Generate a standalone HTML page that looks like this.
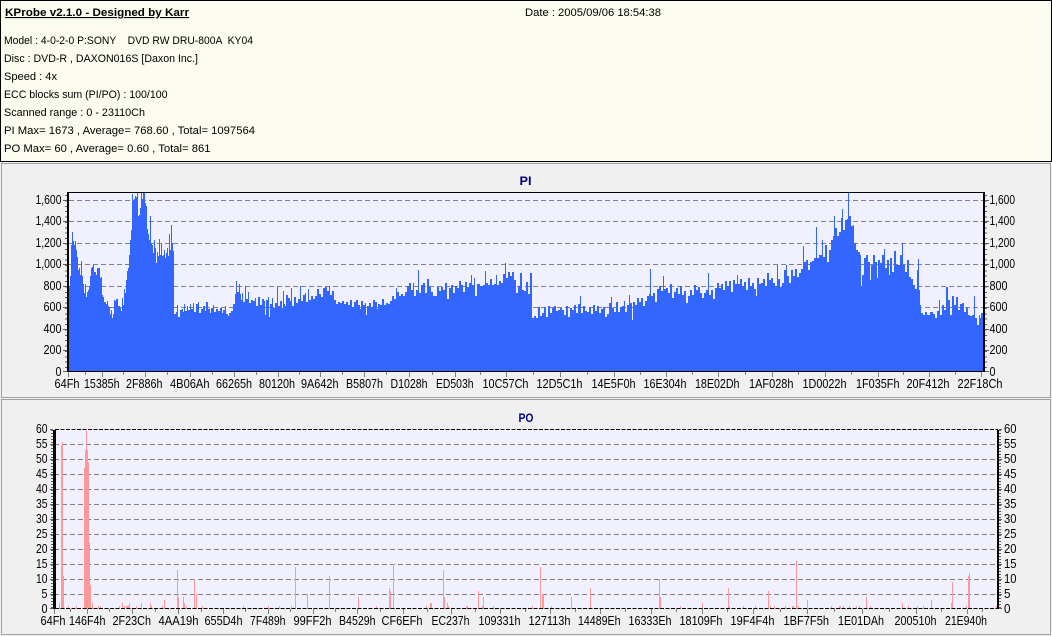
<!DOCTYPE html>
<html><head><meta charset="utf-8"><style>
html,body{margin:0;padding:0;background:#f0f0f0;width:1052px;height:636px;overflow:hidden}
svg{display:block}
text{font-family:"Liberation Sans",sans-serif;fill:#000;white-space:pre}
.h text{font-size:11px}
.a text{font-size:13px}
.c{shape-rendering:crispEdges}
</style></head><body>
<svg width="1052" height="636" viewBox="0 0 1052 636" xmlns="http://www.w3.org/2000/svg">
<rect width="1052" height="636" fill="#f0f0f0"/>
<g class="c">
<rect x="0.5" y="0.5" width="1051" height="161" fill="#fbfbef" stroke="#000"/>
<rect x="0" y="161" width="1052" height="1" fill="#000"/>
<rect x="1.5" y="163.5" width="1049" height="234" fill="#f0f0f0" stroke="#a0a0a0"/>
<rect x="1.5" y="399.5" width="1049" height="235" fill="#f0f0f0" stroke="#a0a0a0"/>
<rect x="68" y="192" width="916" height="180" fill="#f0f0ff"/>
<rect x="53" y="430" width="945" height="179" fill="#f0f0ff"/>
<path stroke="#808080" stroke-dasharray="5 3" fill="none" d="M69 200.5H984M69 221.5H984M69 243.5H984M69 264.5H984M69 286.5H984M69 307.5H984M69 329.5H984M69 350.5H984"/>
<path stroke="#808080" stroke-dasharray="5 3" fill="none" d="M54 444.5H998M54 459.5H998M54 474.5H998M54 489.5H998M54 504.5H998M54 519.5H998M54 534.5H998M54 549.5H998M54 564.5H998M54 579.5H998M54 594.5H998"/>
<path fill="#3366ff" d="M68 372V286H70V276H71V245H72V232H73V241H74V245H75V241H76V250H77V257H78V270H79V268H80V275H81V261H82V276H83V284H84V293H85V284H86V297H87V292H88V290H89V287H90V276H91V268H92V267H93V265H94V272H96V275H97V268H99V268H100V278H101V277H102V295H103V297H104V302H106V304H107V301H108V306H109V307H110V314H111V310H112V318H113V314H114V300H115V301H116V299H118V306H120V308H121V311H122V298H123V305H124V289H125V293H126V280H127V271H128V268H129V255H130V240H131V230H132V194H133V201H134V199H135V196H136V197H137V193H138V216H139V215H140V208H141V193H142V199H143V192H145V203H146V206H147V229H148V234H149V240H150V216H151V243H152V245H153V253H154V240H155V248H156V263H157V252H158V256H159V239H160V255H161V244H162V256H163V255H164V250H165V258H166V253H167V248H168V256H169V234H170V250H171V225H172V243H173V251H174V314H176V312H177V305H178V317H180V310H182V309H183V312H184V304H185V311H187V306H188V310H190V304H191V309H193V303H194V312H196V304H198V302H199V313H201V309H203V306H205V311H206V302H208V309H210V313H211V308H213V305H214V312H216V309H218V311H220V308H222V313H223V310H225V306H226V314H228V316H229V313H231V311H233V304H235V294H236V281H237V292H239V284H240V294H241V300H242V293H243V302H245V286H246V299H248V292H249V303H251V300H253V301H255V298H256V306H258V297H260V305H262V299H264V301H265V315H266V300H268V297H269V317H270V304H272V298H273V308H275V303H277V287H278V306H280V301H282V308H283V291H284V304H285V306H286V295H288V298H290V301H291V288H292V306H294V297H296V303H298V299H300V286H301V301H303V295H305V293H306V302H308V289H309V300H311V296H313V299H315V296H317V289H319V294H321V297H323V288H325V287H327V291H329V286H330V295H332V291H334V300H336V304H338V302H340V303H342V301H344V304H346V302H348V305H350V300H352V307H354V302H356V300H358V305H360V309H361V301H363V305H365V303H366V315H367V306H369V303H371V307H373V300H375V302H377V309H378V304H380V305H382V299H384V305H386V303H388V304H390V301H392V296H394V299H396V288H397V292H399V296H401V294H403V296H405V292H407V286H409V283H411V290H413V283H414V296H416V290H418V270H419V293H421V285H423V283H425V293H427V279H429V287H431V292H433V296H435V296H437V287H439V291H441V287H443V290H445V283H447V299H449V288H451V285H453V293H455V286H457V288H459V281H461V285H463V292H465V282H467V287H469V283H471V275H472V285H474V278H475V296H477V284H480V286H483V285H485V271H486V283H488V285H490V279H492V285H494V284H496V275H497V285H499V281H501V283H503V274H505V263H506V278H508V272H510V276H512V272H514V280H516V293H518V286H520V273H522V290H524V291H526V282H528V294H530V273H532V318H534V316H536V318H538V307H540V316H542V313H544V307H546V317H548V306H550V313H552V308H554V306H556V311H558V310H560V308H562V310H564V315H566V306H568V317H570V308H572V310H574V305H576V313H578V304H580V296H581V313H583V306H585V311H587V312H589V307H591V314H593V305H595V311H597V306H599V313H601V309H603V307H605V317H607V314H609V303H611V297H612V308H614V312H616V302H618V312H620V307H622V306H624V301H625V312H627V305H629V295H630V303H632V320H633V302H635V305H637V298H639V302H641V298H643V306H645V301H647V296H649V294H650V269H651V296H653V293H655V302H657V289H659V286H661V291H663V276H664V289H666V288H668V293H670V284H672V298H674V292H676V288H678V294H680V286H682V295H684V291H686V303H688V296H690V290H692V295H694V285H696V290H698V287H700V293H702V298H704V293H706V290H708V273H709V295H711V290H713V299H715V288H717V283H719V288H721V284H723V290H725V281H727V286H729V281H731V292H733V280H735V284H737V275H738V284H740V279H742V286H744V282H746V290H748V278H750V286H752V283H754V289H756V296H757V278H759V284H761V283H763V279H765V286H767V273H769V280H771V278H773V283H775V286H777V265H778V279H780V287H782V283H784V270H786V265H787V276H789V283H791V270H793V276H795V269H797V277H799V273H801V269H803V246H804V262H806V260H808V270H810V262H812V261H814V258H816V227H817V258H819V255H821V255H822V240H823V257H825V245H827V262H829V250H831V240H833V236H834V216H835V228H837V236H839V232H841V218H842V209H843V230H845V220H847V219H848V192H849V216H851V226H853V225H854V243H856V250H858V252H860V255H861V286H862V275H864V258H866V255H868V262H870V280H871V265H873V255H875V262H877V278H878V260H880V263H882V255H884V249H885V268H887V260H889V275H890V258H892V272H894V251H896V265H898V265H900V255H902V243H903V265H905V272H907V260H909V277H911V279H913V285H915V289H917V270H918V259H919V290H920V305H921V313H923V315H925V312H927V315H930V312H933V314H935V318H937V311H939V300H940V315H942V305H944V310H946V287H948V300H950V315H952V296H954V305H956V297H958V310H960V304H962V303H964V312H966V308H968V315H970V316H972V315H974V296H975V318H977V325H979V315H980V318H981V313H983V301H984V372Z"/>
<path stroke="#ff9999" fill="none" stroke-width="1" d="M59.5 609V603M61.5 609V445M62.5 609V442M63.5 609V576M68.5 609V606M76.5 609V606M84.5 609V468M85.5 609V450M86.5 609V430M87.5 609V450M88.5 609V462M89.5 609V543M90.5 609V585M92.5 609V603M98.5 609V606M100.5 609V606M119.5 609V606M122.5 609V603M124.5 609V606M126.5 609V606M127.5 609V606M128.5 609V606M129.5 609V603M136.5 609V606M141.5 609V603M150.5 609V603M151.5 609V606M162.5 609V606M164.5 609V600M177.5 609V570M178.5 609V597M183.5 609V597M184.5 609V603M186.5 609V606M194.5 609V579M196.5 609V594M202.5 609V606M243.5 609V606M268.5 609V606M279.5 609V606M291.5 609V606M295.5 609V567M307.5 609V594M329.5 609V576M358.5 609V597M376.5 609V606M389.5 609V588M390.5 609V591M393.5 609V564M426.5 609V606M430.5 609V603M431.5 609V603M443.5 609V570M444.5 609V597M447.5 609V603M448.5 609V606M466.5 609V606M467.5 609V606M478.5 609V591M482.5 609V606M483.5 609V597M493.5 609V606M532.5 609V606M540.5 609V567M542.5 609V594M543.5 609V594M551.5 609V606M571.5 609V597M590.5 609V588M659.5 609V579M660.5 609V597M680.5 609V606M702.5 609V603M728.5 609V588M729.5 609V606M743.5 609V606M755.5 609V606M768.5 609V591M770.5 609V606M774.5 609V606M785.5 609V606M792.5 609V606M793.5 609V606M796.5 609V561M798.5 609V606M807.5 609V600M831.5 609V606M839.5 609V606M840.5 609V606M843.5 609V606M849.5 609V606M856.5 609V606M859.5 609V606M866.5 609V597M870.5 609V606M902.5 609V603M908.5 609V606M917.5 609V606M923.5 609V606M931.5 609V600M951.5 609V603M952.5 609V582M966.5 609V606M968.5 609V576M969.5 609V573M996.5 609V606"/>
<path stroke="#000" fill="none" d="M68 192.5H984M68 371.5H985"/>
<rect x="67" y="192" width="2" height="180" fill="#000"/>
<rect x="983" y="192" width="2" height="180" fill="#000"/>
<path stroke="#606060" fill="none" d="M63 200.5H67M63 221.5H67M63 243.5H67M63 264.5H67M63 286.5H67M63 307.5H67M63 329.5H67M63 350.5H67M63 371.5H67M985 200.5H989M985 221.5H989M985 243.5H989M985 264.5H989M985 286.5H989M985 307.5H989M985 329.5H989M985 350.5H989M985 371.5H989"/>
<path stroke="#606060" stroke-width="2" stroke-dasharray="1 4.375" fill="none" d="M66 195V372M986 195V372"/>
<path stroke="#808080" fill="none" d="M68.5 372V377M102.5 372V377M145.5 372V377M190.5 372V377M234.5 372V377M278.5 372V377M320.5 372V377M364.5 372V377M409.5 372V377M455.5 372V377M506.5 372V377M560.5 372V377M614.5 372V377M666.5 372V377M718.5 372V377M772.5 372V377M825.5 372V377M878.5 372V377M929.5 372V377M981.5 372V377M85.5 372V375M123.5 372V375M167.5 372V375M212.5 372V375M256.5 372V375M299.5 372V375M342.5 372V375M386.5 372V375M432.5 372V375M480.5 372V375M533.5 372V375M587.5 372V375M640.5 372V375M692.5 372V375M745.5 372V375M798.5 372V375M851.5 372V375M903.5 372V375M955.5 372V375"/>
<path stroke="#000" stroke-dasharray="4 1.5" fill="none" d="M55 429.5H998M55 608.5H998"/>
<rect x="53" y="430" width="3" height="179" fill="#000"/>
<rect x="997" y="430" width="2" height="179" fill="#000"/>
<path stroke="#606060" fill="none" d="M50 429.5H53M50 444.5H53M50 459.5H53M50 474.5H53M50 489.5H53M50 504.5H53M50 519.5H53M50 534.5H53M50 549.5H53M50 564.5H53M50 579.5H53M50 594.5H53M50 608.5H53M999 429.5H1002M999 444.5H1002M999 459.5H1002M999 474.5H1002M999 489.5H1002M999 504.5H1002M999 519.5H1002M999 534.5H1002M999 549.5H1002M999 564.5H1002M999 579.5H1002M999 594.5H1002M999 608.5H1002"/>
<path stroke="#606060" stroke-dasharray="1 2" stroke-width="2" fill="none" d="M52 430V609M1000 430V609"/>
<path stroke="#808080" fill="none" d="M54.5 609V614M87.5 609V614M132.5 609V614M178.5 609V614M223.5 609V614M268.5 609V614M313.5 609V614M357.5 609V614M403.5 609V614M451.5 609V614M500.5 609V614M550.5 609V614M600.5 609V614M651.5 609V614M702.5 609V614M753.5 609V614M807.5 609V614M862.5 609V614M916.5 609V614M967.5 609V614M70.5 609V612M109.5 609V612M155.5 609V612M201.5 609V612M245.5 609V612M290.5 609V612M335.5 609V612M380.5 609V612M427.5 609V612M475.5 609V612M525.5 609V612M575.5 609V612M625.5 609V612M676.5 609V612M727.5 609V612M780.5 609V612M834.5 609V612M889.5 609V612M941.5 609V612M982.5 609V612"/>
</g>
<g class="h">
<text x="5" y="16" font-weight="bold" text-decoration="underline" textLength="184" lengthAdjust="spacingAndGlyphs">KProbe v2.1.0 - Designed by Karr</text>
<text x="525" y="16" textLength="136" lengthAdjust="spacingAndGlyphs">Date : 2005/09/06 18:54:38</text>
<text x="4" y="44" textLength="249" lengthAdjust="spacingAndGlyphs">Model : 4-0-2-0 P:SONY    DVD RW DRU-800A  KY04</text>
<text x="4" y="62" textLength="194" lengthAdjust="spacingAndGlyphs">Disc : DVD-R , DAXON016S [Daxon Inc.]</text>
<text x="4" y="80" textLength="53" lengthAdjust="spacingAndGlyphs">Speed : 4x</text>
<text x="4" y="98" textLength="163.5" lengthAdjust="spacingAndGlyphs">ECC blocks sum (PI/PO) : 100/100</text>
<text x="4" y="116" textLength="141" lengthAdjust="spacingAndGlyphs">Scanned range : 0 - 23110Ch</text>
<text x="4" y="134" textLength="251" lengthAdjust="spacingAndGlyphs">PI Max= 1673 , Average= 768.60 , Total= 1097564</text>
<text x="4" y="152" textLength="206.5" lengthAdjust="spacingAndGlyphs">PO Max= 60 , Average= 0.60 , Total= 861</text>
<text x="519.5" y="185" font-weight="bold" style="fill:#000080;font-size:12px" textLength="12" lengthAdjust="spacingAndGlyphs">PI</text>
<text x="518.5" y="422" font-weight="bold" style="fill:#000080;font-size:12px" textLength="15" lengthAdjust="spacingAndGlyphs">PO</text>
</g>
<g class="a">
<text x="35.5" y="204" textLength="26" lengthAdjust="spacingAndGlyphs">1,600</text>
<text x="35.5" y="225" textLength="26" lengthAdjust="spacingAndGlyphs">1,400</text>
<text x="35.5" y="247" textLength="26" lengthAdjust="spacingAndGlyphs">1,200</text>
<text x="35.5" y="268" textLength="26" lengthAdjust="spacingAndGlyphs">1,000</text>
<text x="43.5" y="290" textLength="18" lengthAdjust="spacingAndGlyphs">800</text>
<text x="43.5" y="311" textLength="18" lengthAdjust="spacingAndGlyphs">600</text>
<text x="43.5" y="333" textLength="18" lengthAdjust="spacingAndGlyphs">400</text>
<text x="43.5" y="354" textLength="18" lengthAdjust="spacingAndGlyphs">200</text>
<text x="55.5" y="376" textLength="6" lengthAdjust="spacingAndGlyphs">0</text>
<text x="989.5" y="204" textLength="25.5" lengthAdjust="spacingAndGlyphs">1,600</text>
<text x="989.5" y="225" textLength="25.5" lengthAdjust="spacingAndGlyphs">1,400</text>
<text x="989.5" y="247" textLength="25.5" lengthAdjust="spacingAndGlyphs">1,200</text>
<text x="989.5" y="268" textLength="25.5" lengthAdjust="spacingAndGlyphs">1,000</text>
<text x="989.5" y="290" textLength="18" lengthAdjust="spacingAndGlyphs">800</text>
<text x="989.5" y="311" textLength="18" lengthAdjust="spacingAndGlyphs">600</text>
<text x="989.5" y="333" textLength="18" lengthAdjust="spacingAndGlyphs">400</text>
<text x="989.5" y="354" textLength="18" lengthAdjust="spacingAndGlyphs">200</text>
<text x="989.5" y="376" textLength="6" lengthAdjust="spacingAndGlyphs">0</text>
<text x="54.5" y="388" textLength="25" lengthAdjust="spacingAndGlyphs">64Fh</text>
<text x="84" y="388" textLength="35.5" lengthAdjust="spacingAndGlyphs">15385h</text>
<text x="126" y="388" textLength="36.5" lengthAdjust="spacingAndGlyphs">2F886h</text>
<text x="170" y="388" textLength="39.5" lengthAdjust="spacingAndGlyphs">4B06Ah</text>
<text x="216" y="388" textLength="36" lengthAdjust="spacingAndGlyphs">66265h</text>
<text x="259" y="388" textLength="36" lengthAdjust="spacingAndGlyphs">80120h</text>
<text x="301" y="388" textLength="37.5" lengthAdjust="spacingAndGlyphs">9A642h</text>
<text x="346" y="388" textLength="37" lengthAdjust="spacingAndGlyphs">B5807h</text>
<text x="390.5" y="388" textLength="37" lengthAdjust="spacingAndGlyphs">D1028h</text>
<text x="436" y="388" textLength="37.5" lengthAdjust="spacingAndGlyphs">ED503h</text>
<text x="482.5" y="388" textLength="46" lengthAdjust="spacingAndGlyphs">10C57Ch</text>
<text x="536.5" y="388" textLength="46" lengthAdjust="spacingAndGlyphs">12D5C1h</text>
<text x="591.5" y="388" textLength="44" lengthAdjust="spacingAndGlyphs">14E5F0h</text>
<text x="643.5" y="388" textLength="43" lengthAdjust="spacingAndGlyphs">16E304h</text>
<text x="695" y="388" textLength="44.5" lengthAdjust="spacingAndGlyphs">18E02Dh</text>
<text x="749" y="388" textLength="44.5" lengthAdjust="spacingAndGlyphs">1AF028h</text>
<text x="802.5" y="388" textLength="44" lengthAdjust="spacingAndGlyphs">1D0022h</text>
<text x="856" y="388" textLength="43.5" lengthAdjust="spacingAndGlyphs">1F035Fh</text>
<text x="906.5" y="388" textLength="43" lengthAdjust="spacingAndGlyphs">20F412h</text>
<text x="957.5" y="388" textLength="45" lengthAdjust="spacingAndGlyphs">22F18Ch</text>
<text x="36" y="433" textLength="11.5" lengthAdjust="spacingAndGlyphs">60</text>
<text x="36" y="448" textLength="11.5" lengthAdjust="spacingAndGlyphs">55</text>
<text x="36" y="463" textLength="11.5" lengthAdjust="spacingAndGlyphs">50</text>
<text x="36" y="478" textLength="11.5" lengthAdjust="spacingAndGlyphs">45</text>
<text x="36" y="493" textLength="11.5" lengthAdjust="spacingAndGlyphs">40</text>
<text x="36" y="508" textLength="11.5" lengthAdjust="spacingAndGlyphs">35</text>
<text x="36" y="523" textLength="11.5" lengthAdjust="spacingAndGlyphs">30</text>
<text x="36" y="538" textLength="11.5" lengthAdjust="spacingAndGlyphs">25</text>
<text x="36" y="553" textLength="11.5" lengthAdjust="spacingAndGlyphs">20</text>
<text x="36" y="568" textLength="11.5" lengthAdjust="spacingAndGlyphs">15</text>
<text x="36" y="583" textLength="11.5" lengthAdjust="spacingAndGlyphs">10</text>
<text x="41.5" y="598" textLength="6" lengthAdjust="spacingAndGlyphs">5</text>
<text x="41.5" y="613" textLength="6" lengthAdjust="spacingAndGlyphs">0</text>
<text x="1004" y="433" textLength="12.5" lengthAdjust="spacingAndGlyphs">60</text>
<text x="1004" y="448" textLength="12.5" lengthAdjust="spacingAndGlyphs">55</text>
<text x="1004" y="463" textLength="12.5" lengthAdjust="spacingAndGlyphs">50</text>
<text x="1004" y="478" textLength="12.5" lengthAdjust="spacingAndGlyphs">45</text>
<text x="1004" y="493" textLength="12.5" lengthAdjust="spacingAndGlyphs">40</text>
<text x="1004" y="508" textLength="12.5" lengthAdjust="spacingAndGlyphs">35</text>
<text x="1004" y="523" textLength="12.5" lengthAdjust="spacingAndGlyphs">30</text>
<text x="1004" y="538" textLength="12.5" lengthAdjust="spacingAndGlyphs">25</text>
<text x="1004" y="553" textLength="12.5" lengthAdjust="spacingAndGlyphs">20</text>
<text x="1004" y="568" textLength="12.5" lengthAdjust="spacingAndGlyphs">15</text>
<text x="1004" y="583" textLength="12.5" lengthAdjust="spacingAndGlyphs">10</text>
<text x="1004" y="598" textLength="6.5" lengthAdjust="spacingAndGlyphs">5</text>
<text x="1004" y="613" textLength="6.5" lengthAdjust="spacingAndGlyphs">0</text>
<text x="40.5" y="625" textLength="25" lengthAdjust="spacingAndGlyphs">64Fh</text>
<text x="69" y="625" textLength="36.5" lengthAdjust="spacingAndGlyphs">146F4h</text>
<text x="112.5" y="625" textLength="38.5" lengthAdjust="spacingAndGlyphs">2F23Ch</text>
<text x="158.5" y="625" textLength="40" lengthAdjust="spacingAndGlyphs">4AA19h</text>
<text x="204.5" y="625" textLength="38" lengthAdjust="spacingAndGlyphs">655D4h</text>
<text x="250" y="625" textLength="35.5" lengthAdjust="spacingAndGlyphs">7F489h</text>
<text x="293.5" y="625" textLength="38" lengthAdjust="spacingAndGlyphs">99FF2h</text>
<text x="339" y="625" textLength="36.5" lengthAdjust="spacingAndGlyphs">B4529h</text>
<text x="381.5" y="625" textLength="41" lengthAdjust="spacingAndGlyphs">CF6EFh</text>
<text x="431.5" y="625" textLength="38" lengthAdjust="spacingAndGlyphs">EC237h</text>
<text x="478.5" y="625" textLength="42" lengthAdjust="spacingAndGlyphs">109331h</text>
<text x="528.5" y="625" textLength="42" lengthAdjust="spacingAndGlyphs">127113h</text>
<text x="578" y="625" textLength="42.5" lengthAdjust="spacingAndGlyphs">14489Eh</text>
<text x="628.5" y="625" textLength="43" lengthAdjust="spacingAndGlyphs">16333Eh</text>
<text x="679.5" y="625" textLength="43" lengthAdjust="spacingAndGlyphs">18109Fh</text>
<text x="730.5" y="625" textLength="44" lengthAdjust="spacingAndGlyphs">19F4F4h</text>
<text x="783.5" y="625" textLength="45.5" lengthAdjust="spacingAndGlyphs">1BF7F5h</text>
<text x="838" y="625" textLength="46" lengthAdjust="spacingAndGlyphs">1E01DAh</text>
<text x="894.5" y="625" textLength="42" lengthAdjust="spacingAndGlyphs">200510h</text>
<text x="945" y="625" textLength="42" lengthAdjust="spacingAndGlyphs">21E940h</text>
</g>
</svg>
</body></html>
